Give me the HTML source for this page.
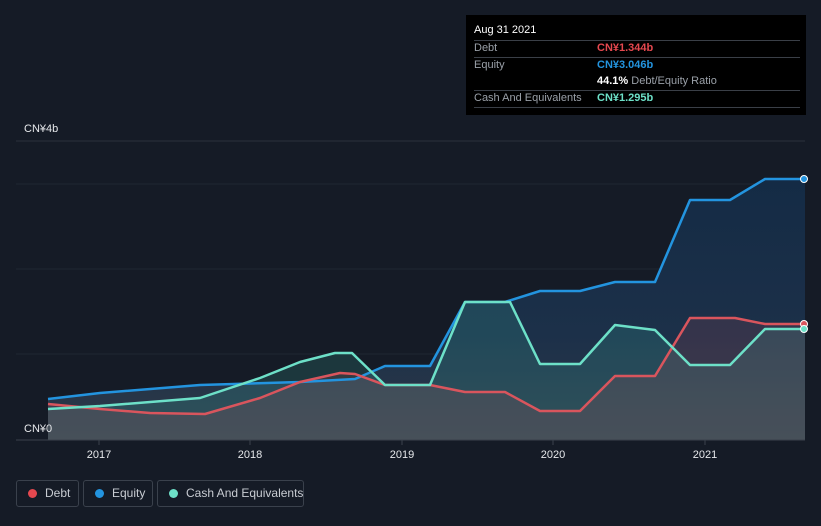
<!DOCTYPE html>
<html><head><style>
html,body{margin:0;background:#151b26;width:821px;height:526px;overflow:hidden;font-family:"Liberation Sans",sans-serif;position:relative}
.tt{position:absolute;left:466px;top:15px;width:340px;height:100px;background:#000;color:#fff;font-size:11px}
.tt .r{position:absolute;left:8px;right:6px;border-top:1px solid #3a3f47}
.lbl{color:#9aa0a8}
.lg{position:absolute;top:480px;height:27px;border:1px solid #3a414c;border-radius:3px;color:#c8ccd2;font-size:12px;line-height:25px;box-sizing:border-box;padding-left:28px;white-space:nowrap}
.lg i{position:absolute;left:11px;top:8px;width:9px;height:9px;border-radius:50%}
</style></head><body>
<svg width="821" height="526" style="position:absolute;left:0;top:0">
<defs>
<linearGradient id="g" x1="0" y1="0" x2="0" y2="1"><stop offset="0" stop-color="#142b45"/><stop offset="0.6" stop-color="#1c3049"/><stop offset="1" stop-color="#2f3a48"/></linearGradient>
</defs>
<line x1="16" y1="141" x2="805" y2="141" stroke="#2c323c"/>
<line x1="16" y1="184" x2="805" y2="184" stroke="#202731"/>
<line x1="16" y1="269" x2="805" y2="269" stroke="#202731"/>
<line x1="16" y1="354" x2="805" y2="354" stroke="#202731"/>
<polygon fill="url(#g)" points="48,440 48,399 100,393 200,385 300,382 355,379 385,366 430,366 465,302 505,302 540,291 580,291 615,282 655,282 690,200 730,200 765,179 805,179 805,440"/>
<polygon fill="#3fb8a8" opacity="0.18" points="48,440 48,409 100,406 200,398 260,378 300,362 335,353 352,353 385,385 430,385 465,302 510,302 540,364 580,364 615,325 655,330 690,365 730,365 765,329 805,329 805,440"/>
<polygon fill="#e0525a" opacity="0.13" points="48,440 48,404 100,409 150,413 205,414 260,398 300,382 340,373 355,374 385,385 430,385 465,392 505,392 540,411 580,411 615,376 655,376 690,318 735,318 765,324 805,324 805,440"/>
<g fill="none" stroke-width="2.5" stroke-linejoin="round">
<polyline stroke="#2394df" points="48,399 100,393 200,385 300,382 355,379 385,366 430,366 465,302 505,302 540,291 580,291 615,282 655,282 690,200 730,200 765,179 805,179"/>
<polyline stroke="#d9555d" points="48,404 100,409 150,413 205,414 260,398 300,382 340,373 355,374 385,385 430,385 465,392 505,392 540,411 580,411 615,376 655,376 690,318 735,318 765,324 805,324"/>
<polyline stroke="#6de0c8" points="48,409 100,406 200,398 260,378 300,362 335,353 352,353 385,385 430,385 465,302 510,302 540,364 580,364 615,325 655,330 690,365 730,365 765,329 805,329"/>
</g>
<circle cx="804" cy="179" r="3.5" fill="#2394df" stroke="#fff" stroke-width="1"/>
<circle cx="804" cy="324" r="3.5" fill="#d9555d" stroke="#fff" stroke-width="1"/>
<circle cx="804" cy="329" r="3.5" fill="#6de0c8" stroke="#fff" stroke-width="1"/>
<line x1="16" y1="440" x2="805" y2="440" stroke="#3a414c"/>
<g stroke="#3a414c"><line x1="99" y1="440" x2="99" y2="445"/><line x1="250" y1="440" x2="250" y2="445"/><line x1="402" y1="440" x2="402" y2="445"/><line x1="553" y1="440" x2="553" y2="445"/><line x1="705" y1="440" x2="705" y2="445"/></g>
<g fill="#e6e8eb" font-size="11" font-family="Liberation Sans" text-anchor="middle">
<text x="99" y="458">2017</text><text x="250" y="458">2018</text><text x="402" y="458">2019</text><text x="553" y="458">2020</text><text x="705" y="458">2021</text>
</g>
<text x="24" y="132" fill="#e6e8eb" font-size="11" font-family="Liberation Sans">CN¥4b</text>
<rect x="16" y="420" width="32" height="19" fill="#151b26"/>
<text x="24" y="432" fill="#e6e8eb" font-size="11" font-family="Liberation Sans">CN¥0</text>
</svg>
<div class="tt">
<div style="position:absolute;left:8px;top:9px">Aug 31 2021</div>
<div class="r" style="top:25px"></div>
<div class="lbl" style="position:absolute;left:8px;top:27px">Debt</div>
<div style="position:absolute;left:131px;top:27px;color:#e5484f;font-weight:bold">CN¥1.344b</div>
<div class="r" style="top:42px"></div>
<div class="lbl" style="position:absolute;left:8px;top:44px">Equity</div>
<div style="position:absolute;left:131px;top:44px;color:#2394df;font-weight:bold">CN¥3.046b</div>
<div style="position:absolute;left:131px;top:60px"><b>44.1%</b> <span class="lbl">Debt/Equity Ratio</span></div>
<div class="r" style="top:75px"></div>
<div class="lbl" style="position:absolute;left:8px;top:77px">Cash And Equivalents</div>
<div style="position:absolute;left:131px;top:77px;color:#6de0c8;font-weight:bold">CN¥1.295b</div>
<div class="r" style="top:92px"></div>
</div>
<div class="lg" style="left:16px;width:63px;padding-left:28px"><i style="background:#e5484f"></i>Debt</div>
<div class="lg" style="left:83px;width:70px"><i style="background:#2394df"></i>Equity</div>
<div class="lg" style="left:157px;width:147px"><i style="background:#6de0c8"></i>Cash And Equivalents</div>
</body></html>
